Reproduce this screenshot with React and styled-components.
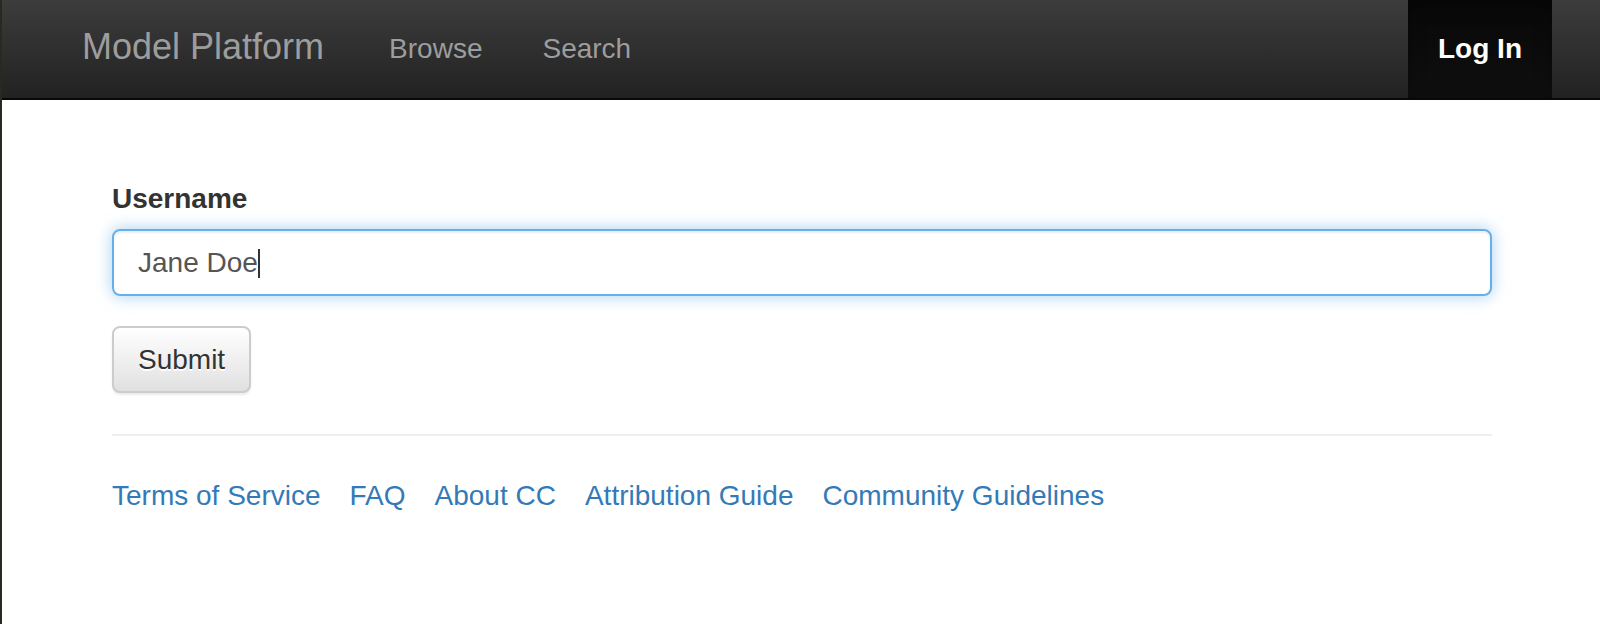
import React from "react";
import styled, { createGlobalStyle } from "styled-components";

const GlobalStyle = createGlobalStyle`
  html, body {
    margin: 0;
    padding: 0;
  }
  body {
    min-height: 100vh;
    box-sizing: border-box;
    border-left: 2px solid #2b2721;
    background: #fff;
    font-family: "Liberation Sans", Arial, sans-serif;
    color: #333;
  }
`;

const Navbar = styled.nav`
  display: flex;
  height: 98px;
  padding: 0 48px 0 80px;
  background-image: linear-gradient(to bottom, #3c3c3c 0%, #222 100%);
  border-bottom: 2px solid #080808;
`;

const Brand = styled.a`
  font-size: 36px;
  line-height: 94px;
  color: #9d9d9d;
  padding-right: 35px;
  text-decoration: none;
`;

const NavLink = styled.a`
  display: block;
  padding: 0 30px;
  font-size: 28px;
  line-height: 98px;
  text-decoration: none;
  color: ${(p) => (p.$active ? "#fff" : "#9d9d9d")};
  font-weight: ${(p) => (p.$active ? "bold" : "normal")};
  background-image: ${(p) =>
    p.$active ? "linear-gradient(to bottom, #080808 0%, #0f0f0f 100%)" : "none"};
  box-shadow: ${(p) => (p.$active ? "inset 0 6px 18px rgba(0, 0, 0, 0.25)" : "none")};
`;

const Spacer = styled.div`
  flex: 1;
`;

const Container = styled.main`
  width: 1380px;
  margin-left: 110px;
  padding-top: 79px;
`;

const FormGroup = styled.div`
  margin-bottom: 30px;
`;

const Label = styled.label`
  display: block;
  font-size: 28px;
  line-height: 40px;
  font-weight: bold;
  color: #333;
  margin-bottom: 10px;
`;

const TextInput = styled.div`
  box-sizing: border-box;
  height: 67px;
  padding: 12px 24px;
  font-size: 28px;
  line-height: 40px;
  color: #555;
  border: 2px solid #66afe9;
  border-radius: 8px;
  box-shadow: inset 0 2px 2px rgba(0, 0, 0, 0.075), 0 0 16px rgba(102, 175, 233, 0.6);
`;

const Caret = styled.span`
  display: inline-block;
  width: 2px;
  height: 29px;
  vertical-align: -6px;
  background: #333;
`;

const Button = styled.button`
  box-sizing: border-box;
  height: 67px;
  padding: 0 24px;
  font-family: inherit;
  font-size: 28px;
  line-height: 40px;
  color: #333;
  text-shadow: 0 2px 0 #fff;
  background-image: linear-gradient(to bottom, #fff 0%, #e0e0e0 100%);
  border: 2px solid #ccc;
  border-radius: 8px;
  box-shadow: inset 0 2px 0 rgba(255, 255, 255, 0.15), 0 2px 2px rgba(0, 0, 0, 0.075);
`;

const Divider = styled.hr`
  margin: 41px 0 40px;
  border: 0;
  border-top: 2px solid #eee;
`;

const FooterLinks = styled.ul`
  display: flex;
  gap: 29px;
  margin: 0;
  padding: 0;
  list-style: none;
`;

const FooterLink = styled.a`
  font-size: 28px;
  line-height: 40px;
  color: #337ab7;
  text-decoration: none;
`;

const footerItems = [
  "Terms of Service",
  "FAQ",
  "About CC",
  "Attribution Guide",
  "Community Guidelines",
];

export default function App() {
  return (
    <>
      <GlobalStyle />
      <Navbar>
        <Brand href="#">Model Platform</Brand>
        <NavLink href="#">Browse</NavLink>
        <NavLink href="#">Search</NavLink>
        <Spacer />
        <NavLink href="#" $active>
          Log In
        </NavLink>
      </Navbar>
      <Container>
        <FormGroup>
          <Label>Username</Label>
          <TextInput>
            Jane Doe
            <Caret />
          </TextInput>
        </FormGroup>
        <Button type="button">Submit</Button>
        <Divider />
        <FooterLinks>
          {footerItems.map((item) => (
            <li key={item}>
              <FooterLink href="#">{item}</FooterLink>
            </li>
          ))}
        </FooterLinks>
      </Container>
    </>
  );
}
